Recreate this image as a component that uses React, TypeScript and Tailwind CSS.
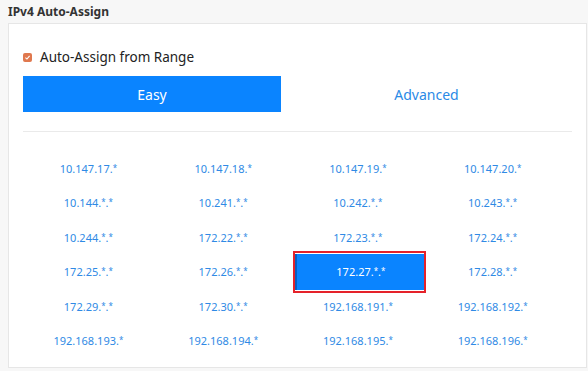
import React from "react";

const ranges = [
  "10.147.17.*",
  "10.147.18.*",
  "10.147.19.*",
  "10.147.20.*",
  "10.144.*.*",
  "10.241.*.*",
  "10.242.*.*",
  "10.243.*.*",
  "10.244.*.*",
  "172.22.*.*",
  "172.23.*.*",
  "172.24.*.*",
  "172.25.*.*",
  "172.26.*.*",
  "172.27.*.*",
  "172.28.*.*",
  "172.29.*.*",
  "172.30.*.*",
  "192.168.191.*",
  "192.168.192.*",
  "192.168.193.*",
  "192.168.194.*",
  "192.168.195.*",
  "192.168.196.*",
];

const selected = "172.27.*.*";

// asterisks in the reference font sit small and high
const RangeLabel = ({ text }: { text: string }) => (
  <>
    {text.split("").map((ch, i) =>
      ch === "*" ? (
        <span key={i} className="relative -top-[2px] text-[8px]">
          *
        </span>
      ) : (
        <span key={i}>{ch}</span>
      )
    )}
  </>
);

export default function App() {
  return (
    <div
      className="h-[371px] w-[588px] overflow-hidden bg-[#f7f7f7] pl-2 pr-[1px]"
      style={{ fontFamily: '"Noto Sans", "Open Sans", sans-serif' }}
    >
      <div className="flex h-[23px] items-center text-[12px] font-bold text-[#333]">
        IPv4 Auto-Assign
      </div>

      <div className="h-[345px] border border-[#e6e6e6] bg-white px-[14px]">
        {/* checkbox row */}
        <div className="mt-[24px] flex h-[18px] items-center gap-[8px]">
          <span className="flex h-[9px] w-[9px] items-center justify-center rounded-[2px] bg-[#e0784e]">
            <svg viewBox="0 0 10 10" className="h-[7px] w-[7px]">
              <path d="M2 5.2 L4.2 7.2 L8 2.8" stroke="white" strokeWidth="1.6" fill="none" />
            </svg>
          </span>
          <span className="text-[13.5px] text-[#222]">Auto-Assign from Range</span>
        </div>

        {/* tabs */}
        <div className="mt-[10px] flex h-[36px]">
          <button className="w-[258px] bg-[#0a84ff] text-[14px] text-white">Easy</button>
          <button className="flex-1 text-[14px] text-[#2a8ae6]">Advanced</button>
        </div>

        <div className="mt-[19px] h-px bg-[#eaeaea]" />

        {/* range grid */}
        <div className="-ml-[2px] mt-[20px] grid w-[539px] grid-cols-4 auto-rows-[34.4px]">
          {ranges.map((r) => (
            <div key={r} className="flex items-center justify-center">
              {r === selected ? (
                <div className="ml-[4px] flex h-[42px] w-[133px] shrink-0 border-2 border-[#e5222a] bg-white py-px">
                  <button className="flex-1 border-l-[2px] border-[#0a5fc0] bg-[#0a84ff] text-[11px] text-white">
                    <RangeLabel text={r} />
                  </button>
                </div>
              ) : (
                <button className="text-[11px] text-[#2f8ae5]">
                  <RangeLabel text={r} />
                </button>
              )}
            </div>
          ))}
        </div>
      </div>
    </div>
  );
}
